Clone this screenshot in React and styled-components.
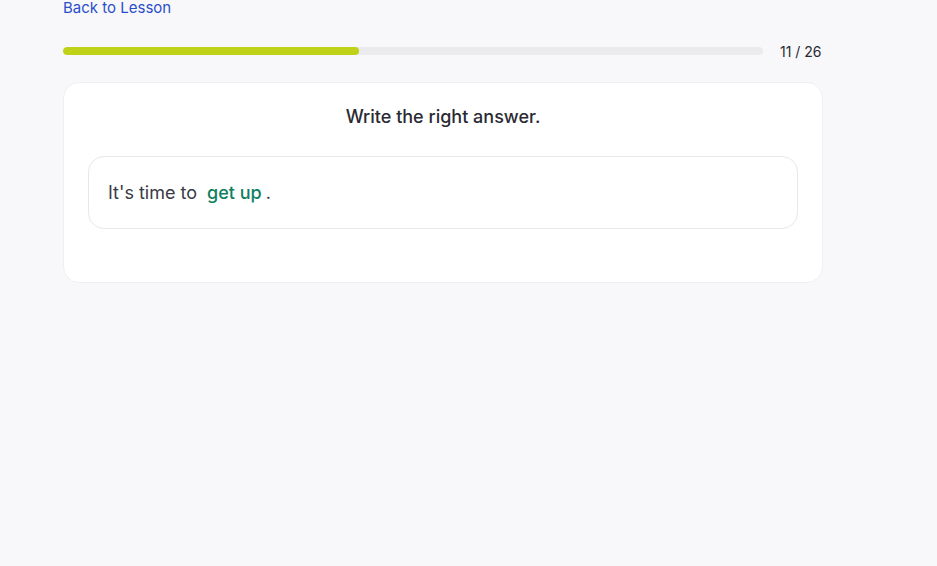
import React from "react";
import styled, { createGlobalStyle } from "styled-components";

const Global = createGlobalStyle`
  html, body { margin: 0; padding: 0; background: #f8f8fa; }
  body { font-family: Inter, "Noto Sans", sans-serif; color: #2a2a33; }
`;

const Page = styled.div`
  width: 760px;
  margin-left: 63px;
  display: flex;
  flex-direction: column;
`;

const BackLink = styled.a`
  font-size: 15px;
  line-height: 16px;
  color: #2a4fc9;
  text-decoration: none;
  align-self: flex-start;
  cursor: pointer;
`;

const ProgressRow = styled.div`
  display: flex;
  align-items: center;
  gap: 17px;
  margin-top: 27px;
  height: 16px;
`;

const Track = styled.div`
  width: 700px;
  height: 8px;
  border-radius: 4px;
  background: #ebebee;
  overflow: hidden;
`;

const Fill = styled.div`
  height: 100%;
  border-radius: 4px;
  background: #c0d218;
`;

const Counter = styled.span`
  font-size: 14px;
  color: #2a2a33;
  white-space: nowrap;
`;

const Card = styled.div`
  margin-top: 23px;
  background: #fff;
  border: 1px solid #efeff2;
  border-radius: 16px;
  padding: 23px 24px 53px;
  display: flex;
  flex-direction: column;
  gap: 28px;
`;

const Title = styled.h2`
  margin: 0;
  font-size: 18px;
  font-weight: 500;
  text-align: center;
  line-height: 22px;
  color: #2a2a33;
`;

const AnswerBox = styled.div`
  border: 1px solid #e8e8ec;
  border-radius: 16px;
  padding: 23px 19px;
  font-size: 18px;
  line-height: 25px;
  color: #3a3a44;
`;

const Answer = styled.span`
  color: #0d8060;
  font-weight: 500;
  padding: 0 4px 0 10px;
`;

export default function App() {
  const done = 11;
  const total = 26;
  return (
    <>
      <Global />
      <Page>
        <BackLink>Back to Lesson</BackLink>
        <ProgressRow>
          <Track>
            <Fill style={{ width: `${(done / total) * 100}%` }} />
          </Track>
          <Counter>
            {done} / {total}
          </Counter>
        </ProgressRow>
        <Card>
          <Title>Write the right answer.</Title>
          <AnswerBox>
            It's time to<Answer>get up</Answer>.
          </AnswerBox>
        </Card>
      </Page>
    </>
  );
}
